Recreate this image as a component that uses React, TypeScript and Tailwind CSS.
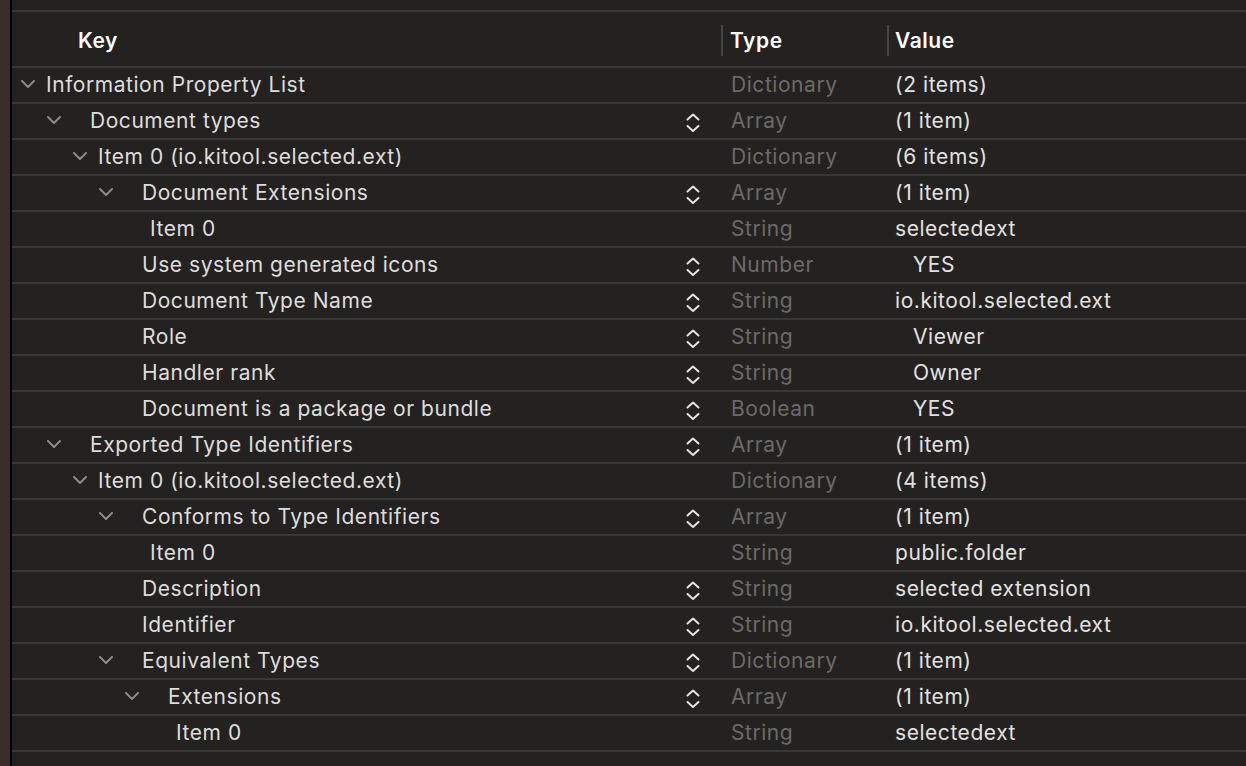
import React from 'react';

type Row = {
    key: string;
    depth: number;
    open?: boolean;
    stepper?: boolean;
    type: string;
    value: string;
    inset?: boolean;
};

const rows: Row[] = [
    { key: 'Information Property List', depth: 0, open: true, type: 'Dictionary', value: '(2 items)' },
    { key: 'Document types', depth: 1, open: true, stepper: true, type: 'Array', value: '(1 item)' },
    { key: 'Item 0 (io.kitool.selected.ext)', depth: 2, open: true, type: 'Dictionary', value: '(6 items)' },
    { key: 'Document Extensions', depth: 3, open: true, stepper: true, type: 'Array', value: '(1 item)' },
    { key: 'Item 0', depth: 4, type: 'String', value: 'selectedext' },
    { key: 'Use system generated icons', depth: 3, stepper: true, type: 'Number', value: 'YES', inset: true },
    { key: 'Document Type Name', depth: 3, stepper: true, type: 'String', value: 'io.kitool.selected.ext' },
    { key: 'Role', depth: 3, stepper: true, type: 'String', value: 'Viewer', inset: true },
    { key: 'Handler rank', depth: 3, stepper: true, type: 'String', value: 'Owner', inset: true },
    { key: 'Document is a package or bundle', depth: 3, stepper: true, type: 'Boolean', value: 'YES', inset: true },
    { key: 'Exported Type Identifiers', depth: 1, open: true, stepper: true, type: 'Array', value: '(1 item)' },
    { key: 'Item 0 (io.kitool.selected.ext)', depth: 2, open: true, type: 'Dictionary', value: '(4 items)' },
    { key: 'Conforms to Type Identifiers', depth: 3, open: true, stepper: true, type: 'Array', value: '(1 item)' },
    { key: 'Item 0', depth: 4, type: 'String', value: 'public.folder' },
    { key: 'Description', depth: 3, stepper: true, type: 'String', value: 'selected extension' },
    { key: 'Identifier', depth: 3, stepper: true, type: 'String', value: 'io.kitool.selected.ext' },
    { key: 'Equivalent Types', depth: 3, open: true, stepper: true, type: 'Dictionary', value: '(1 item)' },
    { key: 'Extensions', depth: 4, open: true, stepper: true, type: 'Array', value: '(1 item)' },
    { key: 'Item 0', depth: 5, type: 'String', value: 'selectedext' },
];

function Chevron() {
    return (
        <svg width="14" height="8" viewBox="0 0 14 8" fill="none">
            <path d="M1 1L7 7L13 1" stroke="#8a8a8a" strokeWidth="2" strokeLinecap="round" strokeLinejoin="round" />
        </svg>
    );
}

function Stepper() {
    return (
        <svg width="14" height="20" viewBox="0 0 14 20" fill="none">
            <path d="M1.5 6.5L7 1.5L12.5 6.5" stroke="#e4e4e4" strokeWidth="2" strokeLinecap="round" strokeLinejoin="round" />
            <path d="M1.5 13L7 18L12.5 13" stroke="#e4e4e4" strokeWidth="2" strokeLinecap="round" strokeLinejoin="round" />
        </svg>
    );
}

export default function App() {
    return (
        <div
            className="flex h-[766px] w-[1246px] overflow-hidden bg-[#242220] text-[21px] leading-none tracking-[0.55px] antialiased"
            style={{ fontFamily: 'Inter, "Noto Sans", sans-serif' }}
        >
            {/* window edge */}
            <div className="w-[10px] shrink-0 bg-[#3a2d29] border-r-2 border-black box-content" />

            <div className="flex-1 flex flex-col">
                <div className="h-[10px] shrink-0" />

                {/* Header */}
                <div className="flex h-[58px] shrink-0 items-center border-y-2 border-[#3a3836] pt-[2px] font-semibold text-white">
                    <div className="w-[709px] pl-[66px]">Key</div>
                    <div className="flex w-[166px] items-center">
                        <span className="h-[31px] w-[2px] bg-[#474543]" />
                        <span className="ml-[7px]">Type</span>
                    </div>
                    <div className="flex items-center">
                        <span className="h-[31px] w-[2px] bg-[#474543]" />
                        <span className="ml-[6px]">Value</span>
                    </div>
                </div>

                {/* Rows */}
                {rows.map((r, i) => (
                    <div key={i} className="flex h-[36px] shrink-0 items-center border-b-2 border-[#3a3836] pb-[2px]">
                        <div className="flex w-[709px] items-center" style={{ paddingLeft: 7 + 26 * r.depth }}>
                            <span className="flex w-[18px] justify-center">{r.open && <Chevron />}</span>
                            <span className={r.stepper ? 'ml-[27px] text-[#dedddc]' : 'ml-[9px] text-[#dedddc]'}>{r.key}</span>
                            {r.stepper && (
                                <span className="ml-auto mr-[21px] mt-[6px] flex">
                                    <Stepper />
                                </span>
                            )}
                        </div>
                        <div className="w-[166px] pl-[10px] text-[#6b6a69]">{r.type}</div>
                        <div className={r.inset ? 'pl-[26px] text-[#e2e1e0]' : 'pl-[8px] text-[#e2e1e0]'}>{r.value}</div>
                    </div>
                ))}
            </div>
        </div>
    );
}
